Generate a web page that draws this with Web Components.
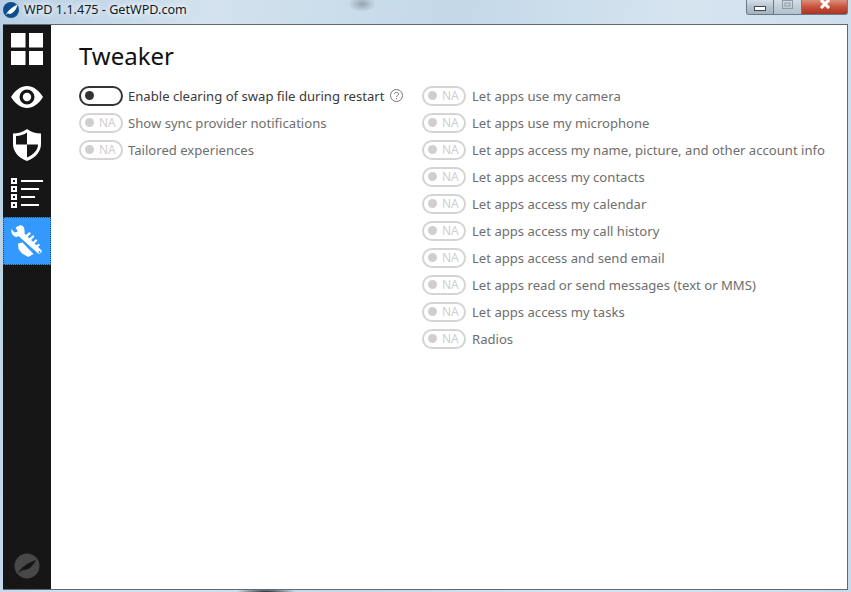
<!DOCTYPE html>
<html>
<head>
<meta charset="utf-8">
<title>WPD</title>
<style>
    html, body { margin: 0; height: 100%; overflow: hidden; }
    body { font-family: "Noto Sans", "Open Sans", sans-serif; }
</style>
</head>
<body>
<wpd-window caption="WPD 1.1.475 - GetWPD.com">
    <wpd-sidebar slot="nav"></wpd-sidebar>
    <wpd-tweaker></wpd-tweaker>
</wpd-window>

<script>
const LOGO_LEAF = 'M3 17 C6 11 10 7 18 3 C17 9 13 14 8 15 L6 14 Z';

class WpdWindow extends HTMLElement {
    connectedCallback() {
        this.attachShadow({ mode: 'open' });
        this.shadowRoot.innerHTML = `
            <style>
                :host {
                    display: flex;
                    flex-direction: column;
                    width: 851px;
                    height: 592px;
                    box-sizing: border-box;
                    padding: 0 3px 2px 3px;
                    background:
                        radial-gradient(ellipse 14px 8px at 362px 4px, rgba(110,120,130,.55), transparent),
                        radial-gradient(ellipse 30px 4px at 266px 592px, rgba(20,20,20,.9), transparent),
                        linear-gradient(100deg, #b9cfe4 0%, #d3e2ee 22%, #c4d8e8 48%, #d6e4f0 72%, #c9dbea 100%);
                }
                .title {
                    display: flex;
                    align-items: center;
                    height: 24px;
                    flex: none;
                    font: 12.6px "Noto Sans", sans-serif;
                    color: #0c1a2a;
                }
                .title > svg { margin: 0 5px 4px 0; flex: none; }
                .title span { flex: 1; margin-bottom: 5px; text-shadow: 0 0 6px #fff, 0 0 6px #fff; }
                .controls { display: flex; align-self: flex-start; height: 15px; }
                .controls div {
                    box-sizing: border-box;
                    height: 15px;
                    border: 1px solid #6c7a88;
                    border-top: 0;
                    display: flex;
                    justify-content: center;
                }
                .min { width: 28px; border-radius: 0 0 0 3px; padding-top: 6px; background: linear-gradient(#d5dfe8, #b4c2cd 50%, #a5b3bf); }
                .max { width: 28px; border-left: 0 !important; background: linear-gradient(#d5dfe8, #c0ccd6 50%, #b5c2cd); }
                .close { width: 46px; border-left: 0 !important; border-radius: 0 0 3px 0; background: linear-gradient(#d9907c, #c9503a 50%, #a83424); }
                .client {
                    flex: 1;
                    min-height: 0;
                    display: flex;
                    background: #fff;
                    border-top: 1px solid #5f6a76;
                    border-right: 1px solid #5f6a76;
                    border-bottom: 1px solid #5f6a76;
                }
                .main { flex: 1; min-width: 0; }
            </style>
            <div class="title">
                <svg width="16" height="16" viewBox="0 0 20 20">
                    <circle cx="10" cy="10" r="10" fill="#0f4f8e"/>
                    <path d="${LOGO_LEAF}" fill="#fff"/>
                </svg>
                <span>${this.getAttribute('caption')}</span>
                <div class="controls">
                    <div class="min"><svg width="12" height="5"><rect x=".5" y=".5" width="11" height="4" fill="#fff" stroke="#3c4650"/></svg></div>
                    <div class="max"><svg width="11" height="9"><rect x=".5" y=".5" width="10" height="8" fill="none" stroke="#8e9aa5"/><rect x="3" y="3" width="5" height="3" fill="none" stroke="#8e9aa5"/></svg></div>
                    <div class="close"><svg width="12" height="9"><path d="M2 0 L10 8 M10 0 L2 8" stroke="#fff" stroke-width="3"/></svg></div>
                </div>
            </div>
            <div class="client">
                <slot name="nav"></slot>
                <div class="main"><slot></slot></div>
            </div>
        `;
    }
}

class WpdSidebar extends HTMLElement {
    connectedCallback() {
        this.attachShadow({ mode: 'open' });
        this.shadowRoot.innerHTML = `
            <style>
                :host {
                    display: flex;
                    flex-direction: column;
                    width: 48px;
                    height: 100%;
                    background: #161616;
                    flex: none;
                }
                .item {
                    box-sizing: border-box;
                    height: 48px;
                    display: flex;
                    align-items: center;
                    justify-content: center;
                }
                .item.active { background: #3399ff; border: 1px dotted #10497f; }
                .spacer { flex: 1; }
                .logo { height: 36px; display: flex; justify-content: center; align-items: flex-start; }
            </style>
            <div class="item">
                <svg width="32" height="32" viewBox="0 0 32 32" fill="#fff">
                    <rect width="14.5" height="14.5"/><rect x="18" width="14.5" height="14.5"/>
                    <rect y="18" width="14.5" height="14.5"/><rect x="18" y="18" width="14.5" height="14.5"/>
                </svg>
            </div>
            <div class="item">
                <svg width="32" height="22" viewBox="0 0 32 22">
                    <path fill="#fff" fill-rule="evenodd" d="M0 11 C5 3.500 10 0 16 0 C22 0 27 3.500 32 11 C27 18.500 22 22 16 22 C10 22 5 18.500 0 11 Z M16 3.500 A7.500 7.500 0 1 0 16 18.500 A7.500 7.500 0 1 0 16 3.500 Z"/>
                    <circle cx="16" cy="11" r="4.200" fill="#fff"/>
                </svg>
            </div>
            <div class="item">
                <svg width="28" height="32" viewBox="0 0 28 32">
                    <path fill="#fff" d="M14 0 C18 3 23 4.500 28 4.500 L28 15 C28 23 22 29 14 32 C6 29 0 23 0 15 L0 4.500 C5 4.500 10 3 14 0 Z"/>
                    <path fill="#161616" d="M14 3.500 L14 15.500 L3 15.500 L3 7 C7 7 11 5.500 14 3.500 Z M14 15.500 L25 15.500 C25 21.500 20 26 14 28.500 Z"/>
                </svg>
            </div>
            <div class="item">
                <svg width="33" height="30" viewBox="0 0 33 30" fill="#fff">
                    <path fill-rule="evenodd" d="M0 0H6V6H0Z M2 2V4H4V2Z M0 8H6V14H0Z M2 10V12H4V10Z M0 16H6V22H0Z M2 18V20H4V18Z M0 24H6V30H0Z M2 26V28H4V26Z"/>
                    <rect x="10" y="2" width="22" height="2"/>
                    <rect x="10" y="10" width="18" height="2"/>
                    <rect x="10" y="18" width="14" height="2"/>
                    <rect x="10" y="26" width="18" height="2"/>
                </svg>
            </div>
            <div class="item active">
                <svg width="32" height="32" viewBox="0 0 32 32" fill="#fff">
                    <path fill-rule="evenodd" d="M9 .2 L4.500 2.500 L6.800 6.500 L3.500 7.500 L.4 4 C-.4 8 2 12 6 12 L7.500 11 L26.800 28.300 C28.500 29.800 31.800 27 30.400 25.200 L13.500 8.500 C14 4 13 .2 9 .2 Z M28.600 25.900 A1 1 0 1 0 28.600 27.900 A1 1 0 1 0 28.600 25.900 Z"/>
                    <g stroke="#fff" stroke-width="2.400" stroke-linecap="round">
                        <path d="M15 11.500 L18.500 8.500"/>
                        <path d="M18.500 15 L22 11.500"/>
                        <path d="M22 18.500 L25 15.500"/>
                        <path d="M25.500 22 L27.500 20"/>
                    </g>
                    <path d="M7 18.500 L11.500 17.500 L22.500 29 L17.300 32 L10.700 28.300 L7.500 24 Z"/>
                </svg>
            </div>
            <div class="spacer"></div>
            <div class="logo">
                <svg width="26" height="26" viewBox="0 0 26 26">
                    <circle cx="13" cy="13" r="12.500" fill="#484848"/>
                    <path fill="#161616" d="M4 20 C8 14 13 10 22 7 C19 13 15 17 10 17 L8 17.500 Z"/>
                </svg>
            </div>
        `;
    }
}

class WpdToggle extends HTMLElement {
    connectedCallback() {
        const on = this.hasAttribute('enabled');
        this.attachShadow({ mode: 'open' });
        this.shadowRoot.innerHTML = `
            <style>
                :host {
                    display: flex;
                    align-items: center;
                    gap: var(--toggle-gap, 5px);
                    height: 27px;
                    font-size: 13.1px;
                    color: ${on ? '#3a3a3a' : '#6e6e6e'};
                    white-space: nowrap;
                }
                .pill {
                    box-sizing: border-box;
                    width: 44px;
                    height: 20px;
                    flex: none;
                    border: 2px solid ${on ? '#333' : '#d4d4d4'};
                    border-radius: 10px;
                    display: flex;
                    align-items: center;
                    padding-left: 4px;
                    gap: 5px;
                    font-size: 12px;
                    color: #cfcfcf;
                }
                .dot { width: 9px; height: 9px; border-radius: 50%; background: ${on ? '#333' : '#cfcfcf'}; }
                svg { margin-left: 1px; }
            </style>
            <div class="pill"><div class="dot"></div>${on ? '' : 'NA'}</div>
            <span><slot></slot></span>
            ${this.hasAttribute('help') ? `<svg width="13" height="13" viewBox="0 0 13 13" fill="none" stroke="#777"><circle cx="6.500" cy="6.500" r="6"/><path d="M4.500 5 C4.500 2.800 8.500 2.800 8.500 5 C8.500 6.500 6.500 6.500 6.500 8"/><path d="M6.500 9 V10.200"/></svg>` : ''}
        `;
    }
}

class WpdTweaker extends HTMLElement {
    connectedCallback() {
        this.attachShadow({ mode: 'open' });
        const left = ['Show sync provider notifications', 'Tailored experiences'];
        const right = [
            'Let apps use my camera',
            'Let apps use my microphone',
            'Let apps access my name, picture, and other account info',
            'Let apps access my contacts',
            'Let apps access my calendar',
            'Let apps access my call history',
            'Let apps access and send email',
            'Let apps read or send messages (text or MMS)',
            'Let apps access my tasks',
            'Radios'
        ];
        const rows = list => list.map(t => `<wpd-toggle>${t}</wpd-toggle>`).join('');
        this.shadowRoot.innerHTML = `
            <style>
                :host { display: block; padding: 12px 0 0 28px; }
                h1 {
                    margin: 0;
                    height: 45px;
                    font: 400 24px/37px "Noto Sans", sans-serif;
                    color: #111;
                }
                .columns { display: grid; grid-template-columns: 343px 1fr; }
                .right { --toggle-gap: 6px; }
            </style>
            <h1>Tweaker</h1>
            <div class="columns">
                <div>
                    <wpd-toggle enabled help>Enable clearing of swap file during restart</wpd-toggle>
                    ${rows(left)}
                </div>
                <div class="right">${rows(right)}</div>
            </div>
        `;
    }
}

customElements.define('wpd-window', WpdWindow);
customElements.define('wpd-sidebar', WpdSidebar);
customElements.define('wpd-toggle', WpdToggle);
customElements.define('wpd-tweaker', WpdTweaker);
</script>
</body>
</html>
